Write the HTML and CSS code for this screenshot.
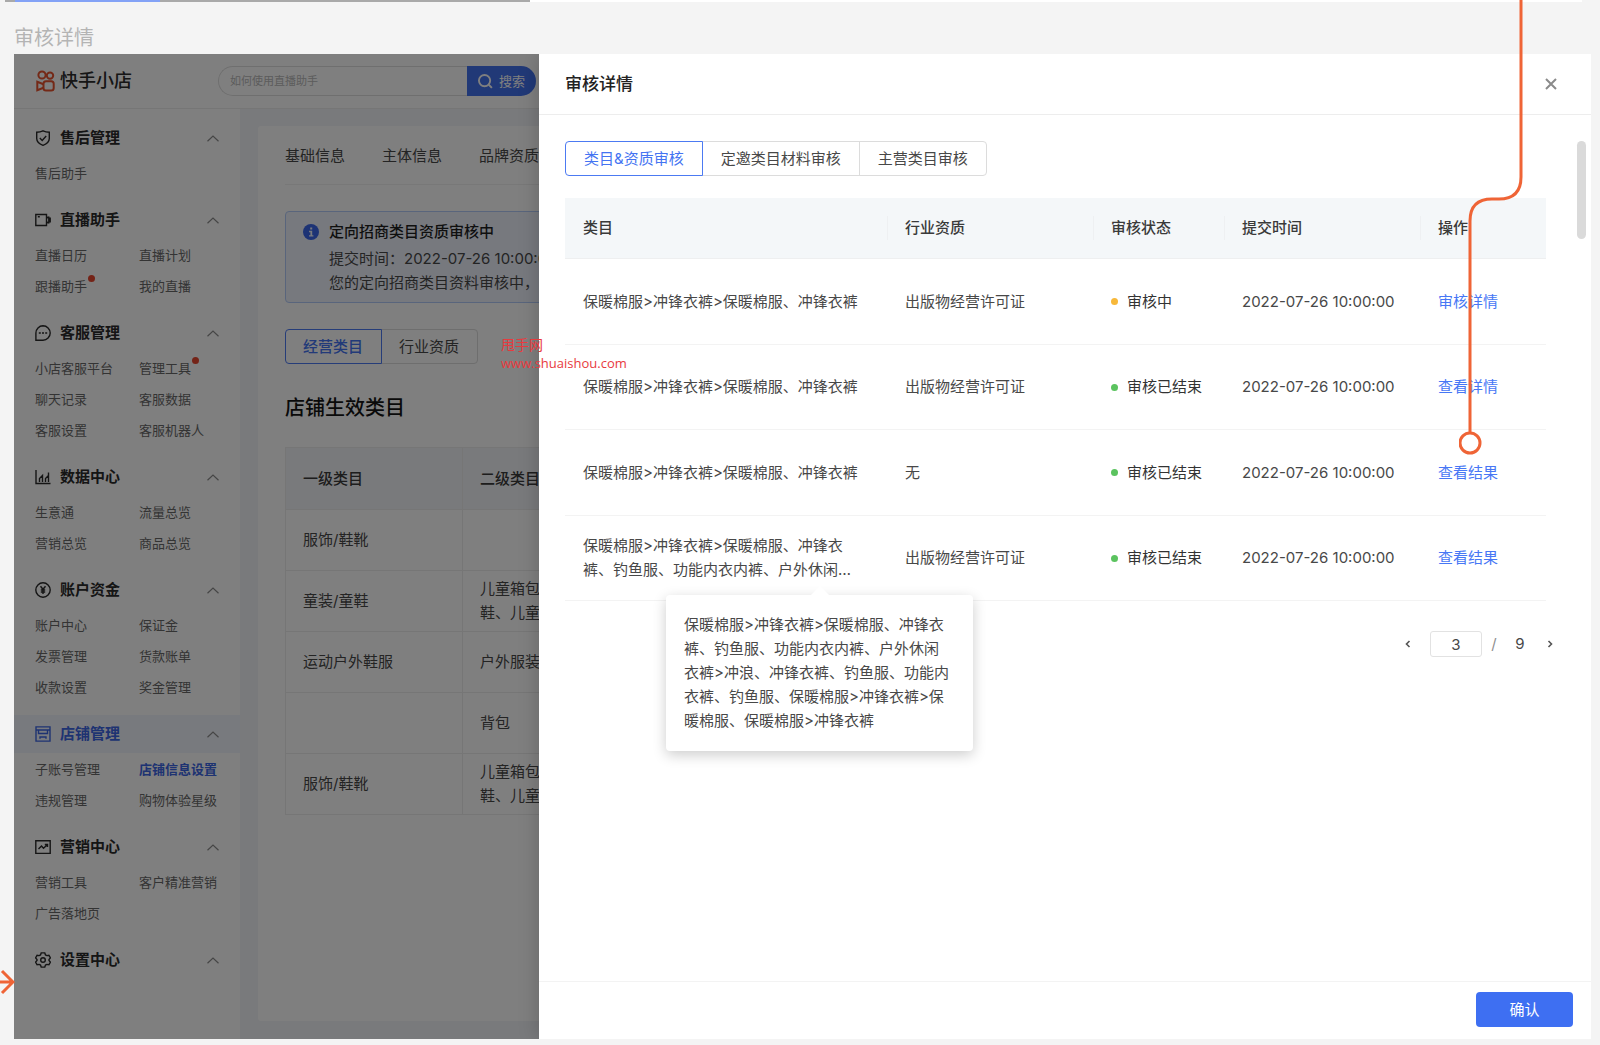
FILE: index.html
```html
<!DOCTYPE html>
<html lang="zh-CN">
<head>
<meta charset="utf-8">
<title>审核详情</title>
<link rel="stylesheet" href="styles.css">
</head>
<body>
<svg class="sprite" aria-hidden="true">
  <symbol id="chevron" viewBox="0 0 12 7"><path d="M.5 6.2 6 1l5.500 5.200"/></symbol>
  <symbol id="shield" viewBox="0 0 16 16"><path d="M8 .8c2 1 4 1.400 6.300 1.400v6.300c0 3-2.300 5.300-6.300 6.800-4-1.500-6.300-3.800-6.300-6.800V2.200C4 2.200 6 1.800 8 .8z"/><path d="m4.800 8 2.400 2.400 4-4.400"/></symbol>
  <symbol id="video" viewBox="0 0 16 16"><path d="M.8 2.500h10.700v11H.8z"/><path d="M13.800 4.500v7M15.200 5.500v5M11.500 6l2-1M11.500 10l2 1M2.800 4.800h2"/></symbol>
  <symbol id="chat" viewBox="0 0 16 16"><path d="M8 .8a7.200 7.200 0 1 1 0 14.400H.9V8A7.200 7.200 0 0 1 8 .8z"/><path d="M3.800 8h2M7 8h2M10.200 8h2"/></symbol>
  <symbol id="bars" viewBox="0 0 16 16"><path d="M1 1v13.500h14.500"/><path d="M4.500 13V9.500l3-3V13M10.500 13V9.500l3-3M13.500 13V3.500"/></symbol>
  <symbol id="yen" viewBox="0 0 16 16"><circle cx="8" cy="8" r="7.200"/><path d="m5.500 4.300 2.500 3 2.500-3M8 7.300V12M5.800 8h4.400M5.800 10h4.400"/></symbol>
  <symbol id="shop" viewBox="0 0 16 16"><path d="M1 .9h14v14.200H1zM1 4h14M3.500 4v3.500h9V4M5 12.800V11h6v1.800"/></symbol>
  <symbol id="trend" viewBox="0 0 16 16"><path d="M.8 1.800h14.400v12.600H.8z"/><path d="m3.500 10 3-3 2 2.200 4-3.700M9.800 5.500h2.700V8"/></symbol>
  <symbol id="gear" viewBox="0 0 16 16"><path d="M6.200.9h3.600l.7 2 1.300.7 2.100-.4 1.500 2.700L14 7.500v1l1.400 1.600-1.500 2.700-2.100-.4-1.300.7-.7 2H6.200l-.7-2-1.300-.7-2.100.4L.6 10.100 2 8.500v-1L.6 5.900l1.500-2.700 2.100.4 1.300-.7z"/><circle cx="8" cy="8" r="2.300"/></symbol>
</svg>

<div class="canvas">
  <div class="previous"><div class="previous-dim"><div class="previous-bar"></div></div></div>
  <h1 class="board-name">审核详情</h1>

  <div class="board">
    <div class="page">
      <header class="topbar">
        <div class="logo">
          <svg class="logo-mark" viewBox="0 0 19 22"><circle cx="6" cy="5" r="3.600"/><circle cx="14" cy="5.600" r="3.200"/><rect x="7.500" y="11.200" width="10.200" height="9.300" rx="2.500"/><path d="M7.500 14.300 1.300 11.800v8.400l6.200-2.500"/></svg>
          <span>快手小店</span>
        </div>
        <form class="search">
          <input type="search" placeholder="如何使用直播助手" aria-label="搜索">
          <button type="button"><svg viewBox="0 0 16 16"><circle cx="7" cy="7" r="6"/><path d="m11.500 11.500 3.300 3.300"/></svg>搜索</button>
        </form>
      </header>

      <div class="columns">
        <nav class="sidebar">
          <section class="group">
            <h2><svg class="icon"><use href="#shield"/></svg>售后管理<svg class="chevron"><use href="#chevron"/></svg></h2>
            <div class="links"><a href="#">售后助手</a></div>
          </section>
          <section class="group">
            <h2><svg class="icon"><use href="#video"/></svg>直播助手<svg class="chevron"><use href="#chevron"/></svg></h2>
            <div class="links"><a href="#">直播日历</a><a href="#">直播计划</a><a href="#" class="unread">跟播助手</a><a href="#">我的直播</a></div>
          </section>
          <section class="group">
            <h2><svg class="icon"><use href="#chat"/></svg>客服管理<svg class="chevron"><use href="#chevron"/></svg></h2>
            <div class="links"><a href="#">小店客服平台</a><a href="#" class="unread">管理工具</a><a href="#">聊天记录</a><a href="#">客服数据</a><a href="#">客服设置</a><a href="#">客服机器人</a></div>
          </section>
          <section class="group">
            <h2><svg class="icon"><use href="#bars"/></svg>数据中心<svg class="chevron"><use href="#chevron"/></svg></h2>
            <div class="links"><a href="#">生意通</a><a href="#">流量总览</a><a href="#">营销总览</a><a href="#">商品总览</a></div>
          </section>
          <section class="group">
            <h2><svg class="icon"><use href="#yen"/></svg>账户资金<svg class="chevron"><use href="#chevron"/></svg></h2>
            <div class="links"><a href="#">账户中心</a><a href="#">保证金</a><a href="#">发票管理</a><a href="#">货款账单</a><a href="#">收款设置</a><a href="#">奖金管理</a></div>
          </section>
          <section class="group current">
            <h2><svg class="icon"><use href="#shop"/></svg>店铺管理<svg class="chevron"><use href="#chevron"/></svg></h2>
            <div class="links"><a href="#">子账号管理</a><a href="#" class="active">店铺信息设置</a><a href="#">违规管理</a><a href="#">购物体验星级</a></div>
          </section>
          <section class="group">
            <h2><svg class="icon"><use href="#trend"/></svg>营销中心<svg class="chevron"><use href="#chevron"/></svg></h2>
            <div class="links"><a href="#">营销工具</a><a href="#">客户精准营销</a><a href="#">广告落地页</a></div>
          </section>
          <section class="group">
            <h2><svg class="icon"><use href="#gear"/></svg>设置中心<svg class="chevron"><use href="#chevron"/></svg></h2>
          </section>
        </nav>

        <main class="content">
          <div class="card">
            <nav class="tabs"><a href="#">基础信息</a><a href="#">主体信息</a><a href="#">品牌资质</a></nav>
            <div class="alert">
              <svg viewBox="0 0 16 16"><circle cx="8" cy="8" r="8"/><path d="M7.200 3.400h2v2h-2zM6 6.800h3.200v4.400h1.200v1.400H6v-1.400h1.400v-3H6z"/></svg>
              <div>
                <strong>定向招商类目资质审核中</strong>
                <p>提交时间：2022-07-26 10:00:00</p>
                <p>您的定向招商类目资料审核中，</p>
              </div>
            </div>
            <div class="segment"><button type="button" class="on">经营类目</button><button type="button">行业资质</button></div>
            <h2 class="card-title">店铺生效类目</h2>
            <table class="shop-table">
              <colgroup><col class="c-level"><col></colgroup>
              <thead><tr><th>一级类目</th><th>二级类目</th></tr></thead>
              <tbody>
                <tr><td>服饰/鞋靴</td><td></td></tr>
                <tr><td>童装/童鞋</td><td>儿童箱包<br>鞋、儿童</td></tr>
                <tr><td>运动户外鞋服</td><td>户外服装</td></tr>
                <tr><td></td><td>背包</td></tr>
                <tr><td>服饰/鞋靴</td><td>儿童箱包<br>鞋、儿童</td></tr>
              </tbody>
            </table>
          </div>
        </main>
      </div>
    </div>

    <div class="mask"></div>

    <section class="drawer" role="dialog" aria-labelledby="drawer-title">
      <header class="drawer-head">
        <h2 id="drawer-title">审核详情</h2>
        <button type="button" class="close" aria-label="关闭"><svg viewBox="0 0 12 12"><path d="m1 1 10 10M11 1 1 11"/></svg></button>
      </header>
      <div class="drawer-body">
        <div class="drawer-main">
          <div class="segment wide"><button type="button" class="on">类目&amp;资质审核</button><button type="button">定邀类目材料审核</button><button type="button">主营类目审核</button></div>
          <div class="audit">
            <table class="audit-table">
              <colgroup><col><col class="c-license"><col class="c-status"><col class="c-time"><col class="c-action"></colgroup>
              <thead><tr><th>类目</th><th>行业资质</th><th>审核状态</th><th>提交时间</th><th>操作</th></tr></thead>
              <tbody>
                <tr><td>保暖棉服&gt;冲锋衣裤&gt;保暖棉服、冲锋衣裤</td><td>出版物经营许可证</td><td><span class="status pending">审核中</span></td><td>2022-07-26 10:00:00</td><td><a href="#">审核详情</a></td></tr>
                <tr><td>保暖棉服&gt;冲锋衣裤&gt;保暖棉服、冲锋衣裤</td><td>出版物经营许可证</td><td><span class="status">审核已结束</span></td><td>2022-07-26 10:00:00</td><td><a href="#">查看详情</a></td></tr>
                <tr><td>保暖棉服&gt;冲锋衣裤&gt;保暖棉服、冲锋衣裤</td><td>无</td><td><span class="status">审核已结束</span></td><td>2022-07-26 10:00:00</td><td><a href="#">查看结果</a></td></tr>
                <tr>
                  <td>
                    <div class="clipped">保暖棉服&gt;冲锋衣裤&gt;保暖棉服、冲锋衣<br>裤、钓鱼服、功能内衣内裤、户外休闲…
                      <div class="tooltip" role="tooltip">保暖棉服&gt;冲锋衣裤&gt;保暖棉服、冲锋衣<br>裤、钓鱼服、功能内衣内裤、户外休闲<br>衣裤&gt;冲浪、冲锋衣裤、钓鱼服、功能内<br>衣裤、钓鱼服、保暖棉服&gt;冲锋衣裤&gt;保<br>暖棉服、保暖棉服&gt;冲锋衣裤</div>
                    </div>
                  </td>
                  <td>出版物经营许可证</td><td><span class="status">审核已结束</span></td><td>2022-07-26 10:00:00</td><td><a href="#">查看结果</a></td>
                </tr>
              </tbody>
            </table>
          </div>
          <div class="pager">
            <button type="button" class="prev" aria-label="上一页"><svg viewBox="0 0 6 8"><path d="M4.500 1 1.500 4l3 3"/></svg></button>
            <input type="text" value="3" aria-label="页码">
            <span class="slash">/</span>
            <span class="total">9</span>
            <button type="button" aria-label="下一页"><svg viewBox="0 0 6 8"><path d="m1.500 1 3 3-3 3"/></svg></button>
          </div>
        </div>
        <div class="scrollbar"></div>
      </div>
      <footer class="drawer-foot"><button type="button" class="confirm">确认</button></footer>
    </section>
  </div>

  <p class="watermark">甩手网<br><span>www.shuaishou.com</span></p>
  <svg class="flow-down" viewBox="0 0 80 460"><path d="M62 0v177q0 22-22 22h-7q-22 0-22 22v212"/><circle cx="11" cy="443" r="10"/></svg>
  <svg class="flow-in" viewBox="0 0 15 26"><path d="M0 13h12M2 2l11 11L2 24"/></svg>
</div>
</body>
</html>
```
FILE: styles.css
```css
* { box-sizing: border-box; }

body {
  margin: 0;
  background: #f4f4f4;
  color: #484848;
  font: 15px/24px Inter, "Noto Sans CJK SC", sans-serif;
}

h1, h2, p { margin: 0; font-weight: 400; }
a { color: inherit; text-decoration: none; }
button, input { font: inherit; color: inherit; margin: 0; padding: 0; border: 0; background: none; }
svg { display: block; fill: none; stroke: currentColor; flex: none; }
.sprite { position: absolute; width: 0; height: 0; }

/* canvas */
.canvas { position: relative; overflow: hidden; padding: 0 9px 6px 14px; }
.previous { display: flex; height: 2px; margin: 0 9px 0 -9px; background: #fff; }
.previous-dim { width: 525px; padding-left: 10px; background: #a9a9a9; }
.previous-bar { width: 145px; height: 2px; background: #83a2f6; }
.board-name { padding: 22px 0 2px; font-size: 20px; line-height: 28px; color: #b4b4b4; }
.board { position: relative; display: flex; min-height: calc(100vh - 60px); overflow: hidden; background: #fff; }
.mask { position: absolute; inset: 0; background: rgba(0, 0, 0, .5); }

/* shop page */
.page { flex: 1; display: flex; flex-direction: column; }
.topbar { display: flex; align-items: center; height: 55px; padding-left: 22px; border-bottom: 1px solid #ececec; }
.logo { display: flex; align-items: center; gap: 5px; width: 182px; font-size: 18px; font-weight: 500; color: #2c2c2c; }
.logo-mark { width: 19px; height: 22px; color: #e8532e; stroke-width: 2; }
.search { display: flex; width: 318px; height: 30px; font-size: 13px; }
.search input { flex: 1; min-width: 0; padding: 0 11px; border: 1px solid #dedede; border-right: 0; border-radius: 15px 0 0 15px; font-size: 11px; }
.search input::placeholder { color: #b8b8b8; opacity: 1; }
.search button { display: flex; align-items: center; justify-content: center; gap: 6px; width: 69px; border-radius: 0 15px 15px 0; background: #4372ee; color: #fff; }
.search svg { width: 15px; height: 15px; stroke-width: 2; }

.columns { flex: 1; display: flex; }
.sidebar { width: 226px; padding-top: 10px; }
.group { padding-bottom: 13px; }
.group h2 { display: flex; align-items: center; gap: 9px; height: 38px; padding: 0 21px; font-size: 15px; font-weight: 700; color: #2a2a2a; }
.icon { width: 16px; height: 16px; stroke-width: 1.4; }
.chevron { width: 12px; height: 7px; margin-left: auto; color: #8c8c8c; stroke-width: 1.2; }
.links { display: grid; grid-template-columns: 104px 1fr; grid-auto-rows: 31px; align-items: center; justify-items: start; padding-left: 21px; font-size: 13px; line-height: 18px; color: #686868; white-space: nowrap; }
.unread { position: relative; }
.unread::after { content: ""; position: absolute; top: -2px; right: -8px; width: 7px; height: 7px; border-radius: 50%; background: #e8472f; }
.current h2 { background: #f1f4fc; color: #3c66e4; }
.links .active { color: #3c66e4; font-weight: 700; }

.content { flex: 1; padding: 17px 18px 18px; background: #f2f4f8; }
.card { height: 100%; padding: 0 27px; background: #fff; border-radius: 3px; }
.tabs { display: flex; gap: 37px; padding: 19px 0 17px; border-bottom: 1px solid #f0f0f0; line-height: 22px; }
.alert { display: flex; gap: 10px; margin: 26px 0; padding: 8px 17px 7px; border: 1px solid #b3cbf8; border-radius: 4px; background: #eff3fd; }
.alert svg { width: 16px; height: 16px; margin-top: 4px; fill: #3a66ea; stroke: none; }
.alert svg path { fill: #eff3fd; }
.alert strong { display: block; margin-bottom: 3px; font-weight: 500; color: #1f1f1f; }

.segment { display: flex; }
.segment button { height: 35px; padding: 0 18px 0 17px; border: 1px solid #dcdcdc; white-space: nowrap; }
.segment button + button { margin-left: -1px; }
.segment button:first-child { border-radius: 4px 0 0 4px; }
.segment button:last-child { border-radius: 0 4px 4px 0; }
.segment .on { position: relative; border-color: #4c7af2; color: #4474f2; }
.segment.wide button { padding: 0 18px; }
.card .segment .on { font-weight: 500; }

.card-title { margin: 30px 0 25px; font-size: 20px; line-height: 28px; font-weight: 500; color: #141414; }

table { width: 100%; border-collapse: separate; border-spacing: 0; table-layout: fixed; }
th { font-weight: 500; text-align: left; color: #3a3a3a; }
th, td { padding: 0 18px; }
.shop-table { border-top: 1px solid #ececec; border-left: 1px solid #ececec; }
.shop-table th, .shop-table td { height: 61px; padding: 0 17px; border-right: 1px solid #ececec; border-bottom: 1px solid #ececec; }
.shop-table th { height: 62px; background: #f3f5f8; }
.c-level { width: 177px; }

/* drawer */
.drawer { position: absolute; inset: 0 0 0 525px; display: flex; flex-direction: column; background: #fff; box-shadow: 0 0 20px rgba(0, 0, 0, .2); }
.drawer-head { display: flex; align-items: center; justify-content: space-between; height: 61px; padding: 0 34px 0 26px; border-bottom: 1px solid #ededed; }
.drawer-head h2 { font-size: 17px; font-weight: 500; color: #222; }
.close svg { width: 12px; height: 12px; color: #8a8a8a; stroke-width: 2; }
.drawer-body { flex: 1; display: flex; padding: 26px 5px 0 26px; }
.drawer-main { flex: 1; padding-right: 19px; }
.scrollbar { width: 9px; height: 98px; border-radius: 5px; background: #dadada; }
.audit { margin: 22px 12px 30px 0; }
.audit-table th { height: 61px; background: #f4f7f9; border-bottom: 1px solid #eeeff0; }
.audit-table th + th { background: linear-gradient(#eef0f2, #eef0f2) left center / 1px 24px no-repeat #f4f7f9; }
.audit-table td { height: 86px; border-bottom: 1px solid #f3f3f3; white-space: nowrap; }
.audit-table tr:nth-child(even) td { height: 85px; }
.audit-table a { color: #4777f5; }
.c-license { width: 206px; }
.c-status { width: 131px; }
.c-time { width: 196px; }
.c-action { width: 126px; }
.status { display: flex; align-items: center; gap: 9px; color: #333; }
.status::before { content: ""; width: 7px; height: 7px; border-radius: 50%; background: #5bc35f; }
.pending::before { background: #f7b83a; }

.clipped { position: relative; }
.tooltip { position: absolute; top: calc(100% + 13px); left: 83px; width: 307px; padding: 18px; border-radius: 4px; background: #fff; box-shadow: 0 4px 14px rgba(0, 0, 0, .2); }
.tooltip::before { content: ""; position: absolute; top: -9px; left: 145px; border: 9px solid transparent; border-top: 0; border-bottom-color: #fff; }

.pager { display: flex; align-items: center; justify-content: flex-end; gap: 8px; height: 26px; }
.pager button { display: flex; justify-content: center; width: 16px; color: #555; }
.pager .prev { width: 28px; }
.pager svg { width: 6px; height: 8px; stroke-width: 1.6; }
.pager input { width: 52px; height: 26px; border: 1px solid #e2e2e2; border-radius: 3px; text-align: center; }
.slash { width: 8px; color: #8f8f8f; text-align: center; }
.total { width: 28px; text-align: center; }

.drawer-foot { display: flex; justify-content: flex-end; padding: 10px 18px 12px; border-top: 1px solid #f3f3f3; }
.confirm { width: 97px; height: 35px; border-radius: 4px; background: #3e6ff2; color: #fff; }

/* annotations on top of the board */
.watermark { position: absolute; left: 501px; top: 336px; font: 14px/18px "Open Sans", "Noto Sans CJK SC", sans-serif; color: #e83a3e; }
.watermark span { font-size: 13px; }
.flow-down { position: absolute; top: 0; right: 61px; width: 80px; height: 460px; color: #ef6436; stroke-width: 3; }
.flow-down circle { fill: #fff; }
.flow-in { position: absolute; left: 0; top: 969px; width: 15px; height: 26px; color: #ef6436; stroke-width: 3; }
```
